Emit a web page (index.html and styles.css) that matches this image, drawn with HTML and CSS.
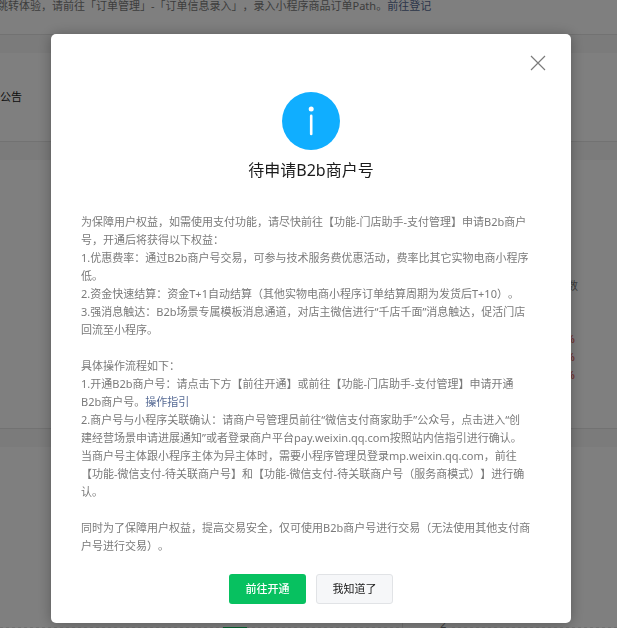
FILE: index.html
```html
<!DOCTYPE html>
<html lang="zh-CN">
<head>
  <meta charset="UTF-8">
  <meta name="viewport" content="width=device-width, initial-scale=1">
  <title>待申请B2b商户号</title>
  <link rel="stylesheet" href="styles.css">
</head>
<body>
  <main class="page">
    <section class="card card-tip">
      <p class="tip-text">跳转体验，请前往「订单管理」-「订单信息录入」，录入小程序商品订单Path。<a href="#">前往登记</a></p>
    </section>
    <section class="card card-notice">
      <h3>公告</h3>
    </section>
    <section class="card card-data">
      <div class="data-head">数</div>
      <ul class="data-list">
        <li>%</li>
        <li>%</li>
        <li>%</li>
      </ul>
    </section>
    <section class="card card-chart">
      <div class="chart-left"><span class="chart-bar"></span></div>
      <div class="chart-right"><span class="chart-label">2</span><span class="chart-line"></span></div>
    </section>
  </main>

  <div class="mask">
    <div class="dialog" role="dialog" aria-labelledby="dialogTitle">
      <button class="dialog-close" type="button" aria-label="关闭">
        <svg width="16" height="16" viewBox="0 0 16 16" fill="none" stroke="#7b7b7b" stroke-width="1.2">
          <path d="M1 1l14 14M15 1L1 15"/>
        </svg>
      </button>
      <div class="dialog-head">
        <svg class="dialog-icon" width="58" height="58" viewBox="0 0 58 58">
          <circle cx="29" cy="29" r="29" fill="#10aeff"/>
          <circle cx="29.2" cy="17" r="2.5" fill="#fff"/>
          <rect x="27.9" y="22.6" width="2.6" height="20.6" rx="1.3" fill="#fff"/>
        </svg>
        <h2 id="dialogTitle">待申请B2b商户号</h2>
      </div>
      <div class="dialog-body">
        <p>为保障用户权益，如需使用支付功能，请尽快前往【功能-门店助手-支付管理】申请B2b商户<br>号，开通后将获得以下权益：</p>
        <p>1.优惠费率：通过B2b商户号交易，可参与技术服务费优惠活动，费率比其它实物电商小程序<br>低。</p>
        <p>2.资金快速结算：资金T+1自动结算（其他实物电商小程序订单结算周期为发货后T+10）。</p>
        <p>3.强消息触达：B2b场景专属模板消息通道，对店主微信进行“千店千面”消息触达，促活门店<br>回流至小程序。</p>
        <br>
        <p>具体操作流程如下：</p>
        <p>1.开通B2b商户号：请点击下方【前往开通】或前往【功能-门店助手-支付管理】申请开通<br>B2b商户号。<a href="#">操作指引</a></p>
        <p>2.商户号与小程序关联确认：请商户号管理员前往“微信支付商家助手”公众号，点击进入“创<br>建经营场景申请进展通知”或者登录商户平台pay.weixin.qq.com按照站内信指引进行确认。</p>
        <p>当商户号主体跟小程序主体为异主体时，需要小程序管理员登录mp.weixin.qq.com，前往<br>【功能-微信支付-待关联商户号】和【功能-微信支付-待关联商户号（服务商模式）】进行确<br>认。</p>
        <br>
        <p>同时为了保障用户权益，提高交易安全，仅可使用B2b商户号进行交易（无法使用其他支付商<br>户号进行交易）。</p>
      </div>
      <div class="dialog-foot">
        <button class="btn btn-primary" type="button">前往开通</button>
        <button class="btn btn-default" type="button">我知道了</button>
      </div>
    </div>
  </div>
</body>
</html>
```

FILE: styles.css
```css
* {
  box-sizing: border-box;
}

body {
  margin: 0;
  font-family: "Noto Sans", "Noto Sans CJK SC", sans-serif;
  font-size: 11px;
  line-height: 18px;
  text-spacing-trim: space-all;
  color: #7a7a7a;
  background: #f6f6f6;
}

h2, h3, p, ul {
  margin: 0;
  padding: 0;
  font-weight: 400;
}

a {
  color: #576b95;
  text-decoration: none;
}

/* 背景页面 */
.page {
  display: flex;
  flex-direction: column;
  gap: 18px;
  height: 100vh;
  overflow: hidden;
}

.card {
  flex-shrink: 0;
  background: #fff;
  border-bottom: 1px solid #e4e4e4;
}

.card-tip {
  height: 35px;
}

.tip-text {
  margin-top: -3px;
  text-indent: -3px;
  white-space: nowrap;
}

.card-notice {
  height: 89px;
  padding-top: 35px;
}

.card-notice h3 {
  font-size: 11px;
  color: #222;
}

.card-data {
  height: 269px;
  padding: 117px 39px 0 0;
  text-align: right;
}

.data-list {
  margin-top: 35px;
  padding-right: 3px;
  list-style: none;
  color: #e64340;
}

.card-chart {
  display: flex;
  height: 260px;
}

.chart-left {
  display: flex;
  flex: 0 0 403px;
  justify-content: center;
  align-items: flex-start;
  padding-left: 68px;
  border-right: 1px solid #e4e4e4;
}

.chart-bar {
  width: 24px;
  height: 30px;
  margin-top: 180px;
  background: #07c160;
}

.chart-left,
.chart-line {
  background: linear-gradient(90deg, #e4e4e4 50%, transparent 50%) 0 180px / 6px 1px repeat-x;
}

.chart-right {
  display: flex;
  flex: 1;
  gap: 6px;
  padding: 168px 0 0 37px;
}

.chart-line {
  flex: 1;
  height: 20px;
  background-position: 0 12px;
}

/* 弹窗 */
.mask {
  position: fixed;
  inset: 0;
  display: flex;
  justify-content: center;
  align-items: flex-start;
  padding: 34px 46px 0 51px;
  background: rgba(0, 0, 0, 0.5);
}

.dialog {
  position: relative;
  width: 100%;
  max-width: 520px;
  padding: 58px 30px 19px;
  background: #fff;
  border-radius: 5px;
  box-shadow: 0 1px 14px rgba(0, 0, 0, 0.3);
}

.dialog-close {
  position: absolute;
  top: 21px;
  right: 25px;
  padding: 0;
  border: none;
  background: none;
  line-height: 0;
  cursor: pointer;
}

.dialog-head {
  display: flex;
  flex-direction: column;
  align-items: center;
  gap: 7px;
}

.dialog-head h2 {
  font-size: 16px;
  line-height: 26px;
  color: #1a1a1a;
}

.dialog-body {
  margin-top: 30px;
  white-space: nowrap;
}

.dialog-foot {
  display: flex;
  justify-content: center;
  gap: 10px;
  margin-top: 19px;
}

.btn {
  width: 77px;
  height: 30px;
  padding: 0 0 2px;
  border: 1px solid transparent;
  border-radius: 3px;
  font-family: inherit;
  font-size: 11px;
  cursor: pointer;
}

.btn-primary {
  background: #07c160;
  color: #fff;
  font-weight: 500;
}

.btn-default {
  background: #f6f7f9;
  border-color: #e1e3e6;
  color: #1a1a1a;
}
```
